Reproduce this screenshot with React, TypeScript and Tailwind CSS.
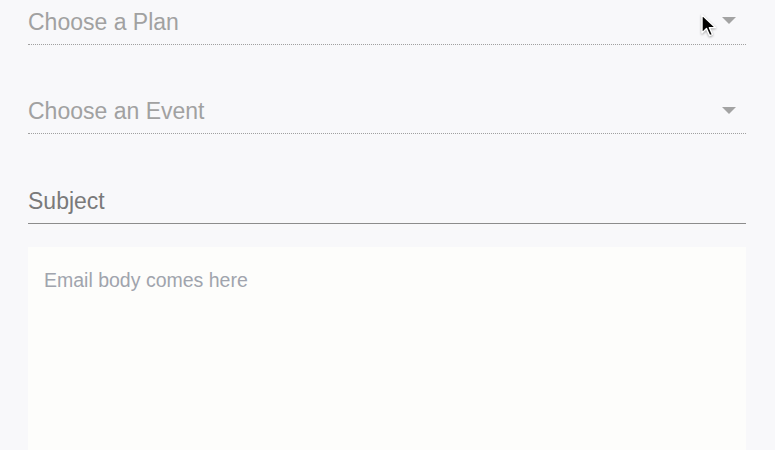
import React from "react";

const Caret = () => (
  <svg width="14" height="7" viewBox="0 0 14 7" className="shrink-0">
    <path d="M0 0 L14 0 L7 7 Z" fill="#a3a3a3" />
  </svg>
);

const Cursor = () => (
  <svg
    width="18"
    height="26"
    viewBox="0 0 18 26"
    className="absolute left-[700px] top-[13px] pointer-events-none"
    style={{ filter: "drop-shadow(0px 1px 1px rgba(0,0,0,0.35))" }}
  >
    <path
      d="M2 2 L2 20 L6.5 15.6 L9.6 22.6 L12.4 21.4 L9.4 14.6 L15.4 14.6 Z"
      fill="#000"
      stroke="#fff"
      strokeWidth="1.4"
      strokeLinejoin="round"
    />
  </svg>
);

export default function App() {
  return (
    <div
      className="relative w-[775px] h-[450px] overflow-hidden bg-[#f8f8fa]"
      style={{ fontFamily: '"Liberation Sans", Arial, Helvetica, sans-serif' }}
    >
      <div className="ml-[28px] w-[718px] flex flex-col">
        <div className="flex items-center justify-between pt-[9px] pb-[9px] border-b border-dotted border-[#a0a0a0]">
          <span className="text-[23px] leading-[26px] text-[#a1a1a1]">Choose a Plan</span>
          <span className="mr-[10px] mt-[-4px]">
            <Caret />
          </span>
        </div>
        <div className="mt-[44px] flex items-center justify-between pt-[9px] pb-[9px] border-b border-dotted border-[#a0a0a0]">
          <span className="text-[23px] leading-[26px] text-[#a1a1a1]">Choose an Event</span>
          <span className="mr-[10px] mt-[-2px]">
            <Caret />
          </span>
        </div>
        <div className="mt-[45px] flex pt-[9px] pb-[9px] border-b border-[#8c8c8c]">
          <span className="text-[23px] leading-[26px] text-[#7a7a7a]">Subject</span>
        </div>
        <div className="mt-[23px] h-[240px] flex bg-[#fdfdfb] px-[16px] pt-[21px]">
          <span className="text-[19.5px] leading-[24px] text-[#a0a4ad]">Email body comes here</span>
        </div>
      </div>
      <Cursor />
    </div>
  );
}
